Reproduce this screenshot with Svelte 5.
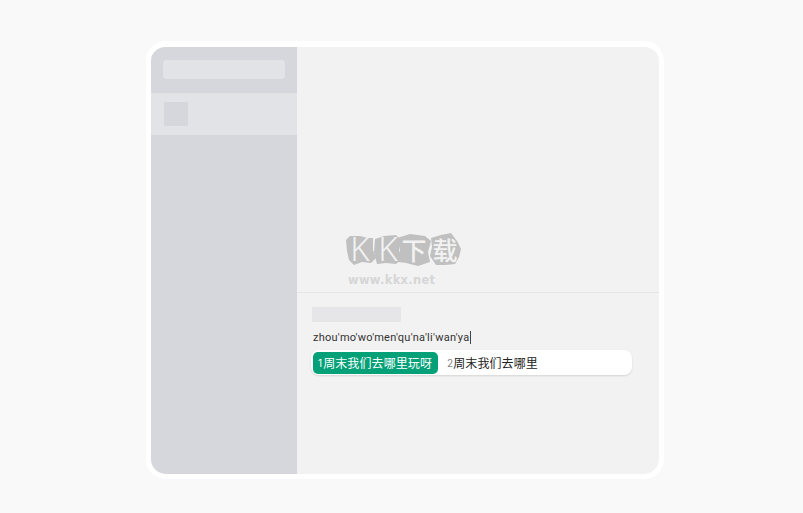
<script>
  const blobs = [
    "346,240 350,236 360,236 368,238 373,238 373,250 376,258 371,263 362,262 354,265 349,260 347,251",
    "375,239 384,236 396,235 401,240 399,250 402,259 396,264 386,263 377,264 374,252",
    "397,238 410,234 425,236 431,241 428,252 430,262 418,266 406,263 398,262 400,250",
    "431,238 441,235 451,233 457,241 461,249 459,257 455,264 445,265 436,265 430,256 432,247"
  ];
  const marks = [
    { text: "K", x: 360, y: 261, cls: "big k" },
    { text: "K", x: 388, y: 261, cls: "big k" },
    { text: "下", x: 414, y: 260, cls: "big" },
    { text: "载", x: 445, y: 260, cls: "big" }
  ];
</script>

<div class="page">
  <div class="frame">
    <aside class="side">
      <div class="head"><div class="search"></div></div>
      <div class="row"><div class="avatar"></div></div>
    </aside>
    <main class="main">
      <div class="chat"></div>
      <div class="input">
        <div class="tools"></div>
        <div class="pinyin">zhou′mo′wo′men′qu′na′li′wan′ya<span class="caret"></span></div>
        <div class="cands">
          <div class="cand on"><span class="num">1</span>周末我们去哪里玩呀</div>
          <div class="cand"><span class="num gray">2</span>周末我们去哪里</div>
        </div>
      </div>
    </main>
  </div>
  <svg class="mark" width="803" height="513" viewBox="0 0 803 513" aria-hidden="true">
    {#each blobs as b}<polygon points={b} fill="#c0c0c0" />{/each}
    {#each marks as m}<text x={m.x} y={m.y} class={m.cls} text-anchor="middle">{m.text}</text>{/each}
    <text x="348" y="284" class="url">www.kkx.net</text>
  </svg>
</div>

<style>
  :global(body) { margin: 0; background: #f9f9f9; }
  .page {
    position: relative;
    width: 803px;
    height: 513px;
    box-sizing: border-box;
    padding-top: 41px;
    padding-left: 146px;
    background: #f9f9f9;
    overflow: hidden;
    font-family: Inter, "Noto Sans CJK SC", sans-serif;
  }
  .frame {
    display: flex;
    width: 508px;
    height: 427px;
    border: 5px solid #fff;
    border-top-width: 6px;
    border-radius: 20px;
    overflow: hidden;
    background: #f2f2f2;
  }
  .side { width: 146px; flex: none; background: #d6d7dc; }
  .head { height: 46px; box-sizing: border-box; padding: 13px 12px 0; }
  .search { height: 19px; border-radius: 3px; background: #e2e3e7; }
  .row { height: 42px; box-sizing: border-box; padding: 9px 13px; background: #e2e3e7; }
  .avatar { width: 24px; height: 24px; background: #d6d7dc; }
  .main { flex: 1; display: flex; flex-direction: column; }
  .chat { height: 245px; flex: none; border-bottom: 1px solid #e6e6e6; }
  .input { padding: 14px 27px 0 14px; }
  .tools { width: 89px; height: 15px; margin-left: 1px; background: #e6e6e8; }
  .pinyin {
    margin-top: 8px;
    margin-left: 2px;
    height: 15px;
    display: flex;
    align-items: center;
    font-family: Roboto, sans-serif;
    font-size: 11px;
    letter-spacing: 0.25px;
    color: #333;
  }
  .caret { width: 1px; height: 13px; margin-left: 1px; background: #444; }
  .cands {
    display: flex;
    align-items: center;
    gap: 9px;
    margin-top: 5px;
    height: 25px;
    box-sizing: border-box;
    padding: 2px;
    background: #fff;
    border-radius: 8px;
    box-shadow: 0 1px 2px rgba(0, 0, 0, 0.12);
  }
  .cand {
    display: flex;
    align-items: center;
    height: 21px;
    font-size: 12px;
    color: #222;
    letter-spacing: 0.1px;
    white-space: nowrap;
  }
  .cand.on {
    width: 125px;
    height: 22px;
    box-sizing: border-box;
    padding-left: 5px;
    background: #04a077;
    color: #fff;
    border-radius: 5px;
  }
  .num { font-size: 10px; margin-right: 1px; }
  .num.gray { color: #888; margin-right: 0; }
  .mark { position: absolute; left: 0; top: 0; pointer-events: none; }
  .big {
    font-family: "Noto Sans CJK SC", sans-serif;
    font-size: 25px;
    font-weight: 500;
    fill: #f2f2f2;
  }
  .big.k {
    font-family: "Noto Sans", sans-serif;
    font-size: 33px;
    font-weight: 300;
  }
  .url {
    font-family: "DejaVu Sans", sans-serif;
    font-size: 11.5px;
    font-weight: 700;
    fill: #d6d6d6;
    letter-spacing: 0.3px;
  }
</style>
